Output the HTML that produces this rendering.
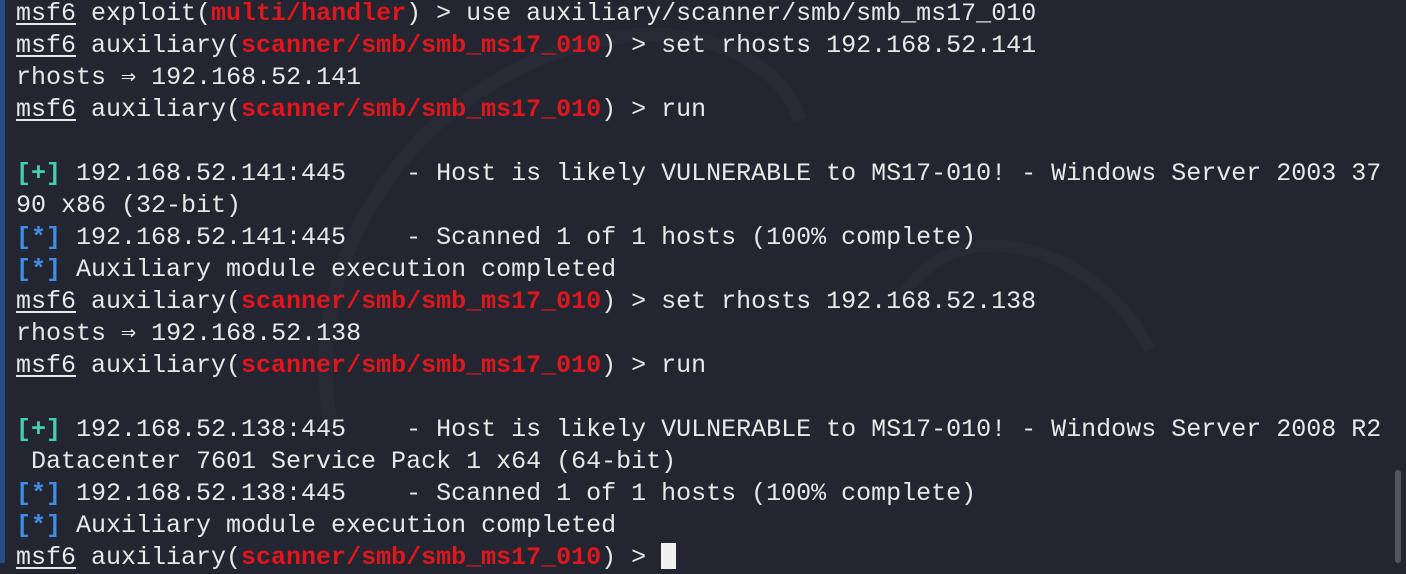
<!DOCTYPE html>
<html><head><meta charset="utf-8"><style>
html,body{margin:0;padding:0;width:1406px;height:563px;overflow:hidden;background:#232630;}
.l{position:absolute;left:0;top:0;width:5px;height:563px;background:#244f82;}
.sb{position:absolute;left:1395px;top:470px;width:6px;height:93px;background:#50545c;border-radius:3px;}
pre{position:absolute;left:16px;top:-2px;margin:0;font-family:"Liberation Mono","DejaVu Sans Mono",monospace;font-size:25px;line-height:32px;color:#e8e8e8;}
u{text-decoration:underline;text-underline-offset:3px;}
.r{color:#e0161e;font-weight:bold;}
.g{color:#3fd1b0;font-weight:bold;}
.b{color:#3b8eea;font-weight:bold;}
.cur{display:inline-block;width:15px;height:26px;background:#f0f0f0;vertical-align:-5px;}
svg{position:absolute;left:0;top:0;}
</style></head><body>
<svg width="1406" height="563"><path d="M330 420 C 300 250, 420 80, 600 40 C 700 20, 780 60, 800 120" stroke="#272a34" stroke-width="14" fill="none"/><path d="M900 300 C 960 200, 1100 250, 1150 350" stroke="#272a34" stroke-width="12" fill="none"/></svg>
<div class="l"></div><div class="sb"></div>
<pre><u>msf6</u> exploit(<span class="r">multi/handler</span>) &gt; use auxiliary/scanner/smb/smb_ms17_010
<u>msf6</u> auxiliary(<span class="r">scanner/smb/smb_ms17_010</span>) &gt; set rhosts 192.168.52.141
rhosts ⇒ 192.168.52.141
<u>msf6</u> auxiliary(<span class="r">scanner/smb/smb_ms17_010</span>) &gt; run

<span class="g">[+]</span> 192.168.52.141:445    - Host is likely VULNERABLE to MS17-010! - Windows Server 2003 37
90 x86 (32-bit)
<span class="b">[*]</span> 192.168.52.141:445    - Scanned 1 of 1 hosts (100% complete)
<span class="b">[*]</span> Auxiliary module execution completed
<u>msf6</u> auxiliary(<span class="r">scanner/smb/smb_ms17_010</span>) &gt; set rhosts 192.168.52.138
rhosts ⇒ 192.168.52.138
<u>msf6</u> auxiliary(<span class="r">scanner/smb/smb_ms17_010</span>) &gt; run

<span class="g">[+]</span> 192.168.52.138:445    - Host is likely VULNERABLE to MS17-010! - Windows Server 2008 R2
 Datacenter 7601 Service Pack 1 x64 (64-bit)
<span class="b">[*]</span> 192.168.52.138:445    - Scanned 1 of 1 hosts (100% complete)
<span class="b">[*]</span> Auxiliary module execution completed
<u>msf6</u> auxiliary(<span class="r">scanner/smb/smb_ms17_010</span>) &gt; <span class="cur"></span></pre>
</body></html>
